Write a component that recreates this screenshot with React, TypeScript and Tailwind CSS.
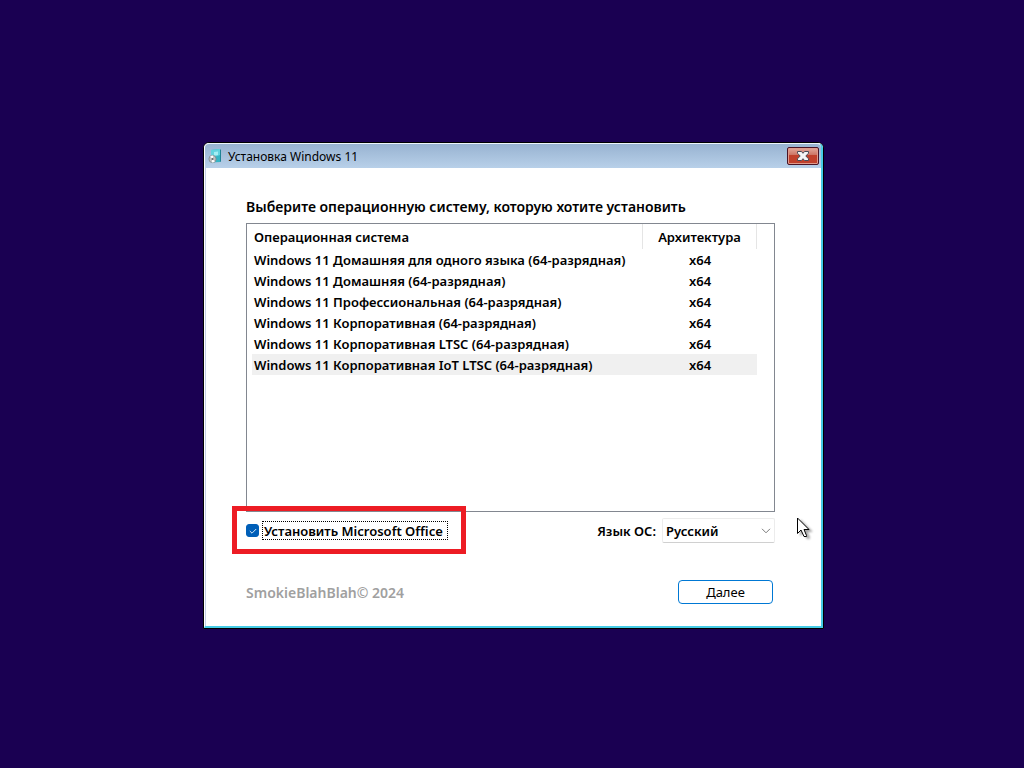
import { useState } from "react";

const systems = [
  "Windows 11 Домашняя для одного языка (64-разрядная)",
  "Windows 11 Домашняя (64-разрядная)",
  "Windows 11 Профессиональная (64-разрядная)",
  "Windows 11 Корпоративная (64-разрядная)",
  "Windows 11 Корпоративная LTSC (64-разрядная)",
  "Windows 11 Корпоративная IoT LTSC (64-разрядная)",
];

function SetupIcon() {
  return (
    <svg className="shrink-0" width="14" height="16" viewBox="0 0 14 16" aria-hidden="true">
      <path d="M3 2 12 1v13l-9 .5z" fill="#35b4c4" />
      <path d="M3 2 12 1v6L3 10z" fill="#62d3df" />
      <path d="M12 1l1 1v11.500l-1 .5z" fill="#1f8496" />
      <path d="M6 4l4-.6V7L6 7.600z" fill="#a5eef4" />
      <circle cx="4.500" cy="11" r="3.600" fill="#bfc2c3" stroke="#7f868a" strokeWidth=".8" />
      <path d="M4.500 11 2.200 8.500a3.600 3.600 0 0 1 3.200-.8zM4.500 11l2.300 2.600a3.600 3.600 0 0 1-3.200.7z" fill="#fff" />
      <circle cx="4.500" cy="11" r="1" fill="#5f666a" />
    </svg>
  );
}

function CloseIcon() {
  return (
    <svg width="12" height="10" viewBox="0 0 12 10" aria-hidden="true">
      <path
        d="M.5.500h4L6 2.300 7.500.500h4v1.700L8.800 5l2.700 2.800v1.700h-4L6 7.700 4.500 9.500h-4V7.800L3.200 5 .500 2.200z"
        fill="#f6f6f6"
        stroke="#4b4c58"
      />
    </svg>
  );
}

function Pointer() {
  return (
    <svg
      className="pointer-events-none absolute top-[374px] left-[593px] drop-shadow-[3px_2px_1px_rgba(0,0,0,0.35)]"
      width="13"
      height="21"
      viewBox="0 0 13 21"
      aria-hidden="true"
    >
      <path d="M.5 1v15.500l3.500-3.500 3 6.500h2.500v-1L7 12.500h5z" fill="#fff" stroke="#000" />
    </svg>
  );
}

export default function App() {
  const [selected, setSelected] = useState(5);
  const [office, setOffice] = useState(true);

  return (
    <div className="flex min-h-screen items-center justify-center bg-[#1a0052] pt-[3px] pl-[3px] font-['Noto_Sans','Open_Sans',sans-serif] text-[13px] leading-[21px] text-black">
      <main className="relative w-full max-w-[621px] rounded-t-[6px] border border-black bg-white">
        <div className="rounded-t-[5px] border-t border-r-2 border-b-2 border-l border-t-[#eef5fb] border-r-[#46cbe6] border-b-[#46cbe6] border-l-white">
          <header className="flex h-6 items-center gap-[6px] rounded-t-[4px] bg-linear-to-b from-[#98b3d1] to-[#b8d0e9] pr-[2px] pl-[3px]">
            <SetupIcon />
            <h1 className="grow text-[12px]">Установка Windows 11</h1>
            <button
              type="button"
              aria-label="Закрыть"
              className="flex h-[18px] w-8 items-center justify-center rounded-[2px] border border-[#4a1425] bg-linear-to-b from-[#e2a89c] from-0% via-[#cb7263] via-45% to-[#c0402c] to-46% inset-ring inset-ring-[#e09a8c]"
            >
              <CloseIcon />
            </button>
          </header>

          <div className="border-l border-[#c3cfe6] pt-7 pr-[46px] pb-[22px] pl-10">
            <h2 id="os-list" className="text-[14px] font-semibold">
              Выберите операционную систему, которую хотите установить
            </h2>

            <div className="mt-[6px] h-[289px] border border-[#828790] pl-[5px]">
              <table
                aria-labelledby="os-list"
                className="w-[505px] table-fixed border-separate border-spacing-0 leading-[19px] font-semibold"
              >
                <thead>
                  <tr className="h-[25px]">
                    <th className="w-[391px] border-r border-[#e5e5e5] p-0 pt-[2px] pl-[2px] text-left font-semibold">
                      Операционная система
                    </th>
                    <th className="border-r border-[#e5e5e5] p-0 pt-[2px] text-center font-semibold">Архитектура</th>
                  </tr>
                </thead>
                <tbody>
                  {systems.map((name, i) => (
                    <tr
                      key={name}
                      onClick={() => setSelected(i)}
                      className={i === selected ? "h-[21px] bg-[#f0f0f0]" : "h-[21px]"}
                    >
                      <td className="p-0 pt-[2px] pl-[2px] whitespace-nowrap">{name}</td>
                      <td className="p-0 pt-[2px] text-center">x64</td>
                    </tr>
                  ))}
                </tbody>
              </table>
            </div>

            <div className="mt-[6px] flex items-center justify-between font-semibold">
              <label className="relative flex items-center gap-[3px]">
                <input
                  type="checkbox"
                  checked={office}
                  onChange={(e) => setOffice(e.target.checked)}
                  className="peer size-[13px] appearance-none rounded-[3px] border border-[#005fb8] checked:bg-[#005fb8]"
                />
                <svg
                  className="pointer-events-none absolute left-[3px] hidden peer-checked:block"
                  width="8"
                  height="6"
                  viewBox="0 0 8 6"
                  aria-hidden="true"
                >
                  <path d="M.8 3 3 5.200 7.200 1" fill="none" stroke="#d5e8f8" />
                </svg>
                <span className="border border-dotted border-black pt-[1px] pr-1 pl-[1px] leading-4">
                  Установить Microsoft Office
                </span>
                <span className="pointer-events-none absolute -top-[15px] -left-[14px] h-12 w-[234px] border-5 border-[#ed1c24]" />
              </label>

              <div className="flex items-center gap-[6px]">
                <label htmlFor="os-language" className="pt-[2px]">
                  Язык ОС:
                </label>
                <div className="relative flex items-center">
                  <select
                    id="os-language"
                    className="h-[25px] w-[113px] appearance-none rounded-[2px] border border-[#ececec] border-b-[#d0d0d0] bg-white pt-[2px] pl-[3px] font-semibold"
                  >
                    <option>Русский</option>
                  </select>
                  <svg
                    className="pointer-events-none absolute right-1"
                    width="10"
                    height="6"
                    viewBox="0 0 10 6"
                    aria-hidden="true"
                  >
                    <path d="M1 .8 5 4.800 9 .8" fill="none" stroke="#7a7a7a" />
                  </svg>
                </div>
              </div>
            </div>

            <footer className="mt-[37px] flex items-center justify-between pr-[2px]">
              <p className="text-[14px] font-semibold text-[#a0a0a0]">SmokieBlahBlah© 2024</p>
              <button type="button" className="h-6 w-[95px] rounded-[4px] border border-[#0078d4] bg-white leading-5">
                Далее
              </button>
            </footer>
          </div>
        </div>
        <Pointer />
      </main>
    </div>
  );
}
